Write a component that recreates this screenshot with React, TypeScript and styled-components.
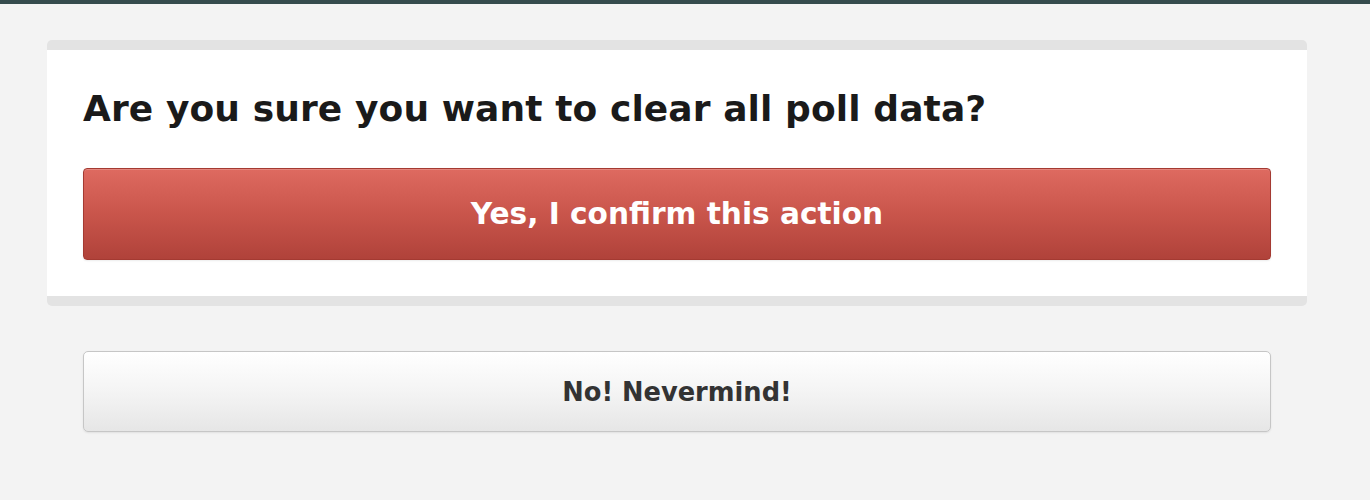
import React, { FC } from 'react';
import styled, { createGlobalStyle } from 'styled-components';

const GlobalStyle = createGlobalStyle`
    html, body {
        margin: 0;
        padding: 0;
        background: #f3f3f3;
        font-family: "DejaVu Sans", Verdana, sans-serif;
    }
`;

const App: FC = () => {
    return (
        <Page>
            <GlobalStyle />
            <TopBar />
            <Content>
                <ConfirmCard>
                    <Question>Are you sure you want to clear all poll data?</Question>
                    <ConfirmButton type="button">Yes, I confirm this action</ConfirmButton>
                </ConfirmCard>
                <CancelRow>
                    <CancelButton type="button">No! Nevermind!</CancelButton>
                </CancelRow>
            </Content>
        </Page>
    );
};

export default App;

const Page = styled.div`
    min-height: 500px;
    background: #f3f3f3;
`;

const TopBar = styled.div`
    height: 4px;
    background: #354b4d;
`;

const Content = styled.div`
    padding: 36px 63px 0 47px;
`;

const ConfirmCard = styled.div`
    background: #fff;
    border-top: 10px solid #e3e3e3;
    border-bottom: 10px solid #e3e3e3;
    border-radius: 5px;
    padding: 36px;
`;

const Question = styled.h1`
    margin: 0 0 36px;
    font-size: 36px;
    line-height: 46px;
    font-weight: bold;
    color: #1a1a1a;
    letter-spacing: 0.1px;
`;

const BaseButton = styled.button`
    display: block;
    width: 100%;
    font-family: "DejaVu Sans", Verdana, sans-serif;
    font-weight: bold;
    border-radius: 4px;
    cursor: pointer;
`;

const ConfirmButton = styled(BaseButton)`
    height: 92px;
    font-size: 29.6px;
    color: #fff;
    background: linear-gradient(to bottom, #de6a60 0%, #c9554b 50%, #b0423a 100%);
    border: 1px solid #a43a32;
    box-shadow: inset 0 1px 0 rgba(255, 255, 255, 0.2), 0 1px 2px rgba(0, 0, 0, 0.08);
`;

const CancelRow = styled.div`
    padding: 45px 36px 0;
`;

const CancelButton = styled(BaseButton)`
    height: 81px;
    font-size: 25.7px;
    color: #333;
    background: linear-gradient(to bottom, #ffffff 0%, #f4f4f4 50%, #e6e6e6 100%);
    border: 1px solid #c6c6c6;
    border-radius: 5px;
    box-shadow: 0 1px 2px rgba(0, 0, 0, 0.08);
`;
